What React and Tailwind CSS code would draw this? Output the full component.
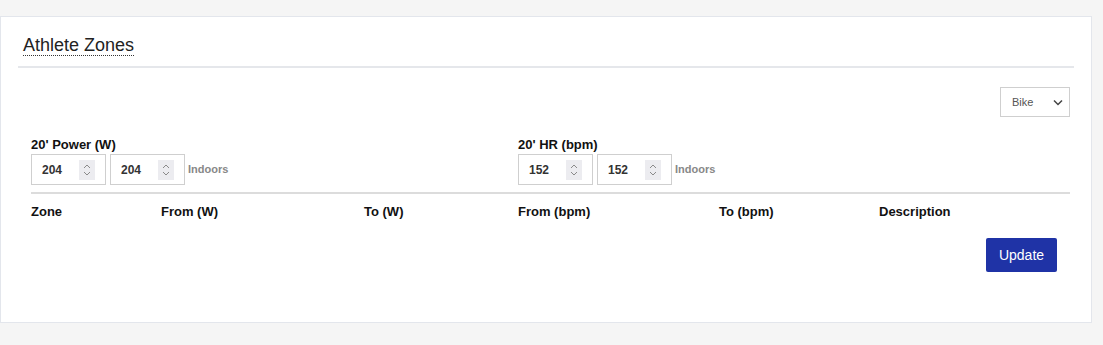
import { useState } from "react";

function Spin() {
    return (
        <span className="flex h-[20px] w-[16px] flex-col items-center justify-center bg-[#ececf0]">
            <svg width="8" height="14" viewBox="0 0 8 14" fill="none" stroke="#8a8a8a" strokeWidth="1">
                <path d="M1 5 L4 2 L7 5" />
                <path d="M1 9 L4 12 L7 9" />
            </svg>
        </span>
    );
}

function NumBox({ value, w }) {
    return (
        <div className={"flex h-[31px] items-center justify-between border border-[#cfcfcf] pl-[10px] pr-[10px] " + w}>
            <span className="text-[12px] font-bold text-[#333]">{value}</span>
            <Spin />
        </div>
    );
}

function Threshold({ label, value }) {
    return (
        <div className="flex flex-col">
            <div className="mb-[2px] text-[13px] leading-[15px] font-bold text-[#111]">{label}</div>
            <div className="flex items-center gap-[4px]">
                <NumBox value={value} w="w-[75px]" />
                <NumBox value={value} w="w-[75px]" />
                <span className="ml-[-1px] text-[11px] font-bold text-[#888]">Indoors</span>
            </div>
        </div>
    );
}

export default function App() {
    const [sport, setSport] = useState("Bike");

    return (
        <div className="min-h-[345px] bg-[#f5f5f5] pt-[16px] pr-[11px] font-['Liberation_Sans',Arial,sans-serif]">
            <div className="h-[307px] border border-[#e3e6ec] bg-white">
                <div className="mx-[17px] border-b-2 border-[#e5e7eb] pt-[17px] pb-[8px]">
                    <span className="ml-[5px] border-b border-dotted border-[#333] text-[18px] leading-[22px] text-[#222]">
                        Athlete Zones
                    </span>
                </div>

                <div className="pl-[30px] pr-[21px]">
                    <div className="flex justify-end pt-[19px]">
                        <div className="flex h-[30px] w-[70px] items-center justify-between border border-[#cfcfcf] pl-[11px] pr-[6px]">
                            <span className="text-[11px] text-[#555]">{sport}</span>
                            <svg width="10" height="7" viewBox="0 0 10 7" fill="none" stroke="#444" strokeWidth="1.5" onClick={() => setSport(sport)}>
                                <path d="M1 1.5 L5 5.5 L9 1.5" />
                            </svg>
                        </div>
                    </div>

                    <div className="mt-[20px] grid grid-cols-[487px_1fr]">
                        <Threshold label="20' Power (W)" value="204" />
                        <Threshold label="20' HR (bpm)" value="152" />
                    </div>

                    <div className="mt-[7px] border-t-2 border-[#dcdcdc]">
                        <div className="grid grid-cols-[130px_203px_154px_201px_160px_1fr] pt-[10px] text-[13px] leading-[15px] font-bold text-[#111]">
                            <span>Zone</span>
                            <span>From (W)</span>
                            <span>To (W)</span>
                            <span>From (bpm)</span>
                            <span>To (bpm)</span>
                            <span>Description</span>
                        </div>
                    </div>

                    <div className="mt-[19px] flex justify-end pr-[13px]">
                        <button className="h-[34px] w-[71px] rounded-[2px] bg-[#1f33a6] text-[14px] text-white">
                            Update
                        </button>
                    </div>
                </div>
            </div>
        </div>
    );
}
